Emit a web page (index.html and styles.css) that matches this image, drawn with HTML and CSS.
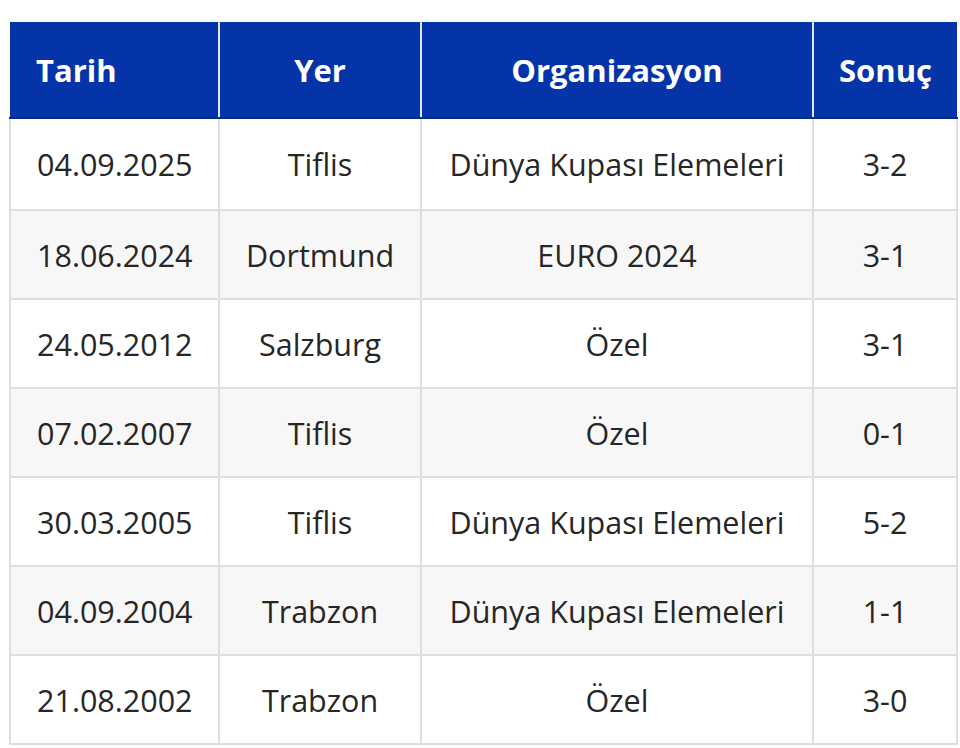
FILE: index.html
```html
<!DOCTYPE html>
<html lang="tr">
<head>
<meta charset="utf-8">
<link rel="stylesheet" href="styles.css">
</head>
<body>
<div class="wrap">
<table class="matches">
  <colgroup>
    <col class="c1"><col class="c2"><col class="c3"><col class="c4">
  </colgroup>
  <thead>
    <tr><th class="left">Tarih</th><th>Yer</th><th>Organizasyon</th><th>Sonuç</th></tr>
  </thead>
  <tbody>
    <tr class="first"><td class="left">04.09.2025</td><td>Tiflis</td><td>Dünya Kupası Elemeleri</td><td>3-2</td></tr>
    <tr><td class="left">18.06.2024</td><td>Dortmund</td><td>EURO 2024</td><td>3-1</td></tr>
    <tr><td class="left">24.05.2012</td><td>Salzburg</td><td>Özel</td><td>3-1</td></tr>
    <tr><td class="left">07.02.2007</td><td>Tiflis</td><td>Özel</td><td>0-1</td></tr>
    <tr><td class="left">30.03.2005</td><td>Tiflis</td><td>Dünya Kupası Elemeleri</td><td>5-2</td></tr>
    <tr><td class="left">04.09.2004</td><td>Trabzon</td><td>Dünya Kupası Elemeleri</td><td>1-1</td></tr>
    <tr><td class="left">21.08.2002</td><td>Trabzon</td><td>Özel</td><td>3-0</td></tr>
  </tbody>
</table>
</div>
</body>
</html>
```

FILE: styles.css
```css
html, body {
  margin: 0;
  background: #ffffff;
}
.wrap {
  padding: 22px 0 0 9px;
}
.matches {
  border-collapse: collapse;
  table-layout: fixed;
  width: 947px;
  font-family: "Open Sans", "Noto Sans", sans-serif;
  font-size: 30.5px;
  color: #262626;
}
.c1 { width: 209px; }
.c2 { width: 202px; }
.c3 { width: 392px; }
.c4 { width: 144px; }
.matches th {
  background: #0434a8;
  color: #ffffff;
  font-size: 31px;
  font-weight: 700;
  height: 95px;
  padding: 0;
  text-align: center;
  border-left: 2px solid #dfe6f3;
  border-bottom: 2px solid #0a2a80;
}
.matches th:first-child { border-left: none; }
.matches td {
  height: 87px;
  padding: 0;
  text-align: center;
  border: 2px solid #dedede;
}
.matches .first td {
  height: 90px;
}
.matches .left {
  text-align: left;
  padding-left: 26px;
}
.matches tbody tr:nth-child(even) td {
  background: #f7f7f7;
}
```
